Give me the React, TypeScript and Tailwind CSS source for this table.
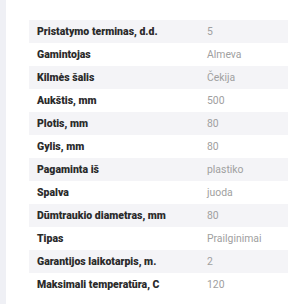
import React from 'react';

const specs: [string, string][] = [
  ['Pristatymo terminas, d.d.', '5'],
  ['Gamintojas', 'Almeva'],
  ['Kilmės šalis', 'Čekija'],
  ['Aukštis, mm', '500'],
  ['Plotis, mm', '80'],
  ['Gylis, mm', '80'],
  ['Pagaminta iš', 'plastiko'],
  ['Spalva', 'juoda'],
  ['Dūmtraukio diametras, mm', '80'],
  ['Tipas', 'Prailginimai'],
  ['Garantijos laikotarpis, m.', '2'],
  ['Maksimali temperatūra, C', '120'],
];

export default function App() {
  return (
    <div className="flex h-[304px] w-[288px] overflow-hidden bg-white font-['Roboto',sans-serif]">
      <div className="w-[6px] shrink-0 bg-[#eff0f5]" />
      <div className="flex-1 pl-[23px] pt-5">
        <div className="flex flex-col">
          {specs.map(([label, value], i) => (
            <div
              key={label}
              className={`flex h-[23px] items-center ${i % 2 === 0 ? 'bg-[#f4f4f7]' : 'bg-white'}`}
            >
              <span className="w-[178px] shrink-0 pl-2 text-[10.5px] font-black text-[#2b2b2b]">{label}</span>
              <span className="text-[10.4px] text-[#a0a0a0]">{value}</span>
            </div>
          ))}
        </div>
      </div>
    </div>
  );
}
